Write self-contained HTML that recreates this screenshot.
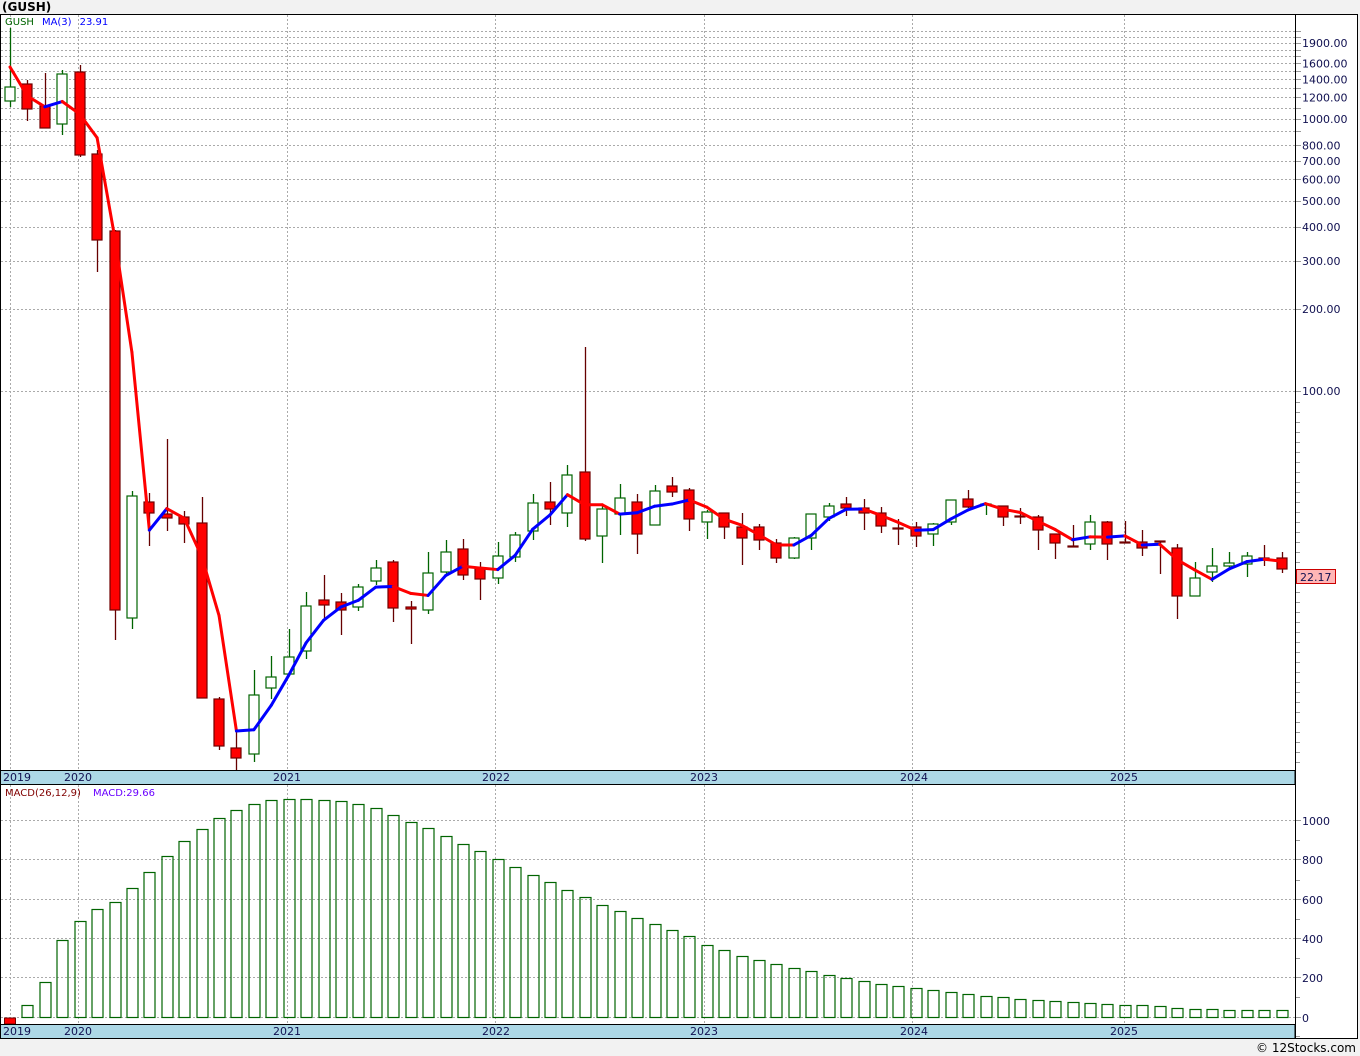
<!DOCTYPE html>
<html><head><meta charset="utf-8"><style>
html,body{margin:0;padding:0;background:#f2f2f2;width:1360px;height:1056px;overflow:hidden}
svg{display:block;font-family:"DejaVu Sans","Liberation Sans",sans-serif}
</style></head><body>
<svg id="c" width="1360" height="1056" viewBox="0 0 1360 1056" xmlns="http://www.w3.org/2000/svg">
<rect x="0" y="0" width="1360" height="1056" fill="#f2f2f2"/>
<text x="2" y="11" font-size="12" font-weight="bold" fill="#000">(GUSH)</text>
<rect x="0.5" y="14.5" width="1357" height="1024" fill="#fff" stroke="#000"/>
<g id="g"></g>
</svg>
<script>
var g=document.getElementById('g'),h='';
function Y(p){return 391-272*Math.log10(p/100);}
function P(y){return 100*Math.pow(10,(391-y)/272);}
var lv=[2100,2000,1900,1800,1700,1600,1500,1400,1300,1200,1100,1000,900,800,700,600,500,400,300,200,100];
lv.forEach(function(p){var y=Math.round(Y(p))+.5;h+='<line x1="1" y1="'+y+'" x2="1295" y2="'+y+'" stroke="#aaa" stroke-dasharray="2,2"/><line x1="1295" y1="'+y+'" x2="1301" y2="'+y+'" stroke="#999"/>';});
[1900,1600,1400,1200,1000,800,700,600,500,400,300,200,100].forEach(function(p){h+='<text x="1302" y="'+(Y(p)+4)+'" font-size="11" fill="#101050">'+p+'.00</text>';});
for(var y=402;y<770;y+=10){h+='<line x1="1295" y1="'+y+'.5" x2="1300" y2="'+y+'.5" stroke="#999"/>';}
var xs=[10,78,287,495,704,912,1124],yr=['2019','2020','2021','2022','2023','2024','2025'];
xs.forEach(function(x){h+='<line x1="'+x+'.5" y1="15" x2="'+x+'.5" y2="770" stroke="#aaa" stroke-dasharray="2,2"/><line x1="'+x+'.5" y1="785" x2="'+x+'.5" y2="1024" stroke="#aaa" stroke-dasharray="2,2"/>';});
[[1000,820],[800,859],[600,899],[400,938],[200,977],[0,1017]].forEach(function(a){h+='<line x1="1" y1="'+a[1]+'.5" x2="1295" y2="'+a[1]+'.5" stroke="#aaa" stroke-dasharray="2,2"/><line x1="1295" y1="'+a[1]+'.5" x2="1301" y2="'+a[1]+'.5" stroke="#999"/><text x="1302" y="'+(a[1]+5)+'" font-size="11" fill="#101050">'+a[0]+'</text>';});
[840,880,919,958,997,1036].forEach(function(y){h+='<line x1="1295" y1="'+y+'.5" x2="1300" y2="'+y+'.5" stroke="#999"/>';});
var C=[[1,101,87,28,107],[0,84,109,80,121],[0,106,128,73,128],[1,124,74,70,135],[0,72,155,65,157],[0,154,240,150,272],[0,231,610,230,640],[1,618,496,491,629],[0,502,513,493,546],[0,514,518,439,531],[0,517,524,511,543],[0,523,698,497,698],[0,699,746,697,750],[0,748,758,732,770],[1,754,695,670,762],[1,688,677,656,699],[1,674,657,629,675],[1,651,606,592,659],[0,600,605,575,620],[0,602,610,593,635],[1,607,587,584,611],[1,581,568,560,585],[0,562,608,560,622],[0,607,609,601,644],[1,610,573,552,614],[1,572,552,540,575],[0,549,575,539,580],[0,568,579,562,600],[1,578,556,542,584],[1,557,535,532,562],[1,531,503,494,540],[0,502,509,482,525],[1,513,475,465,527],[0,472,539,347,541],[1,536,509,505,563],[1,514,498,484,535],[0,502,534,494,554],[1,525,491,485,525],[0,486,492,477,497],[0,490,519,488,531],[1,522,512,510,539],[0,513,527,513,539],[0,527,538,513,565],[0,527,540,524,550],[0,543,558,539,563],[1,558,538,537,559],[1,538,514,514,550],[1,517,506,503,521],[0,504,508,497,516],[0,508,513,499,530],[0,513,526,507,533],[0,528,529,519,545],[0,527,536,522,547],[1,534,524,523,546],[1,522,500,500,525],[0,499,507,490,508],[1,505,504,503,515],[0,506,517,506,526],[0,516,517,508,524],[0,517,530,515,550],[0,534,543,534,559],[0,546,547,525,547],[1,544,522,515,550],[0,522,544,521,560],[0,542,543,521,543],[0,542,548,530,556],[0,541,542,541,574],[0,548,596,544,619],[1,596,578,562,596],[1,572,566,548,582],[1,566,563,552,570],[1,564,556,552,577],[0,558,559,545,566],[0,558,569,552,573]];
function X(i){return 10+i*17.42;}
var ma=[];C.forEach(function(c,i){var s=0,n=0;for(var k=Math.max(0,i-2);k<=i;k++){s+=P(C[k][2]);n++;}ma.push(Y(s/n));});
ma[0]=67;ma[1]=96;
C.forEach(function(c,i){var x=Math.round(X(i))+.5,t=Math.min(c[1],c[2]),b=Math.max(c[1],c[2]);if(b-t<1)b=t+1;
var sc=c[0]?'#006400':'#660000';
h+='<line x1="'+x+'" y1="'+c[3]+'" x2="'+x+'" y2="'+c[4]+'" stroke="'+sc+'" stroke-width="1.3"/>';
h+='<rect x="'+(x-5.5)+'" y="'+t+'" width="10" height="'+(b-t)+'" fill="'+(c[0]?'#fff':'#f00')+'" stroke="'+(c[0]?'#006400':'#700000')+'" stroke-width="1.2"/>';});
for(var i=1;i<ma.length;i++){h+='<line x1="'+X(i-1)+'" y1="'+ma[i-1]+'" x2="'+X(i)+'" y2="'+ma[i]+'" stroke="'+(ma[i]<ma[i-1]?'#0000ff':'#ff0000')+'" stroke-width="3" stroke-linecap="round"/>';}
var M=[1024,1005,982,940,921,909,902,888,872,856,841,829,818,810,804,800,799,799,800,801,804,808,815,822,828,836,844,851,859,867,875,882,890,897,905,911,918,924,930,936,945,950,956,960,964,968,971,975,978,981,984,986,988,990,992,994,996,997,999,1000,1001,1002,1003,1004,1005,1005,1006,1008,1009,1009,1010,1010,1010,1010];
M.forEach(function(t,i){var x=Math.round(X(i))+.5;if(i==0){h+='<rect x="'+(x-6)+'" y="1018" width="11" height="6" fill="#f00" stroke="#700000"/>';}else h+='<rect x="'+(x-5.5)+'" y="'+t+'.5" width="11" height="'+(1017-t)+'" fill="none" stroke="#006400" stroke-width="1.2"/>';});
[[770,784],[1024,1038]].forEach(function(r){h+='<rect x="0.5" y="'+r[0]+'.5" width="1294.5" height="'+(r[1]-r[0])+'" fill="#add8e6" stroke="#000"/>';
[3,64,273,482,690,900,1110].forEach(function(x,k){h+='<text x="'+x+'" y="'+(r[0]+11)+'" font-size="11" fill="#101050">'+yr[k]+'</text>';});});
h+='<line x1="1295.5" y1="15" x2="1295.5" y2="1038" stroke="#000"/>';
h+='<text x="5" y="25" font-size="10"><tspan fill="#006400">GUSH</tspan><tspan fill="#0000ff" dx="8">MA(3)</tspan><tspan fill="#0000ff" dx="8">23.91</tspan></text>';
h+='<text x="5" y="796" font-size="10"><tspan fill="#800000">MACD(26,12,9)</tspan><tspan fill="#6a00ff" dx="12">MACD:29.66</tspan></text>';
h+='<rect x="1296.5" y="569.5" width="39" height="14" fill="#ffb6b6" stroke="#c00"/><text x="1300" y="581" font-size="11" fill="#101050">22.17</text>';
h+='<text x="1356" y="1052" font-size="12" text-anchor="end" fill="#000">© 12Stocks.com</text>';
g.innerHTML=h;
</script>
</body></html>
